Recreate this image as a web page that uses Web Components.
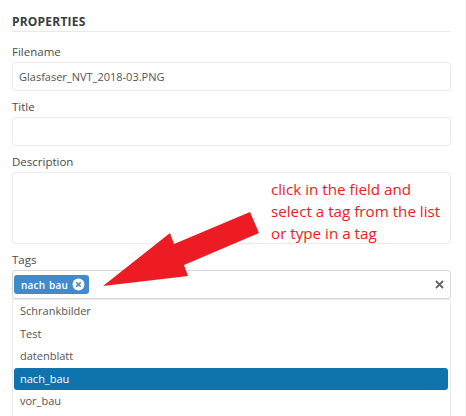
<!DOCTYPE html>
<html>
<head>
<meta charset="utf-8">
<style>
  html, body { margin: 0; padding: 0; background: #fff; }
  body { width: 466px; height: 416px; overflow: hidden; font-family: "Open Sans", sans-serif; }
</style>
</head>
<body>
<properties-panel>
  <prop-field label="Filename" value="Glasfaser_NVT_2018-03.PNG"></prop-field>
  <prop-field label="Title"></prop-field>
  <prop-field label="Description" rows="multi"></prop-field>
  <tag-select label="Tags" tag="nach_bau">
    <tag-option>Schrankbilder</tag-option>
    <tag-option>Test</tag-option>
    <tag-option>datenblatt</tag-option>
    <tag-option active>nach_bau</tag-option>
    <tag-option>vor_bau</tag-option>
  </tag-select>
  <red-note></red-note>
</properties-panel>

<script>
class PropertiesPanel extends HTMLElement {
  connectedCallback() {
    this.attachShadow({ mode: 'open' });
    this.shadowRoot.innerHTML = `
      <style>
        :host {
          display: block;
          position: relative;
          height: 416px;
          box-sizing: border-box;
          padding: 14px 14px 0 12px;
          background: #fff;
          border-right: 1px solid #f4f4f4;
          color: #4a4a4a;
          overflow: hidden;
        }
        h2 {
          margin: 0 0 12px;
          height: 17px;
          padding-bottom: 0;
          border-bottom: 1px solid #e8e8e8;
          font-size: 12px;
          line-height: 15px;
          font-weight: 700;
          color: #3c3c3c;
          letter-spacing: 0.2px;
        }
      </style>
      <h2>PROPERTIES</h2>
      <slot></slot>
    `;
  }
}
customElements.define('properties-panel', PropertiesPanel);

class PropField extends HTMLElement {
  connectedCallback() {
    this.attachShadow({ mode: 'open' });
    const multi = this.getAttribute('rows') === 'multi';
    this.shadowRoot.innerHTML = `
      <style>
        :host { display: block; margin-bottom: 8px; }
        label {
          display: block;
          height: 17px;
          margin-bottom: 1px;
          font-size: 11.5px;
          line-height: 16px;
          color: #4a4a4a;
        }
        .box {
          box-sizing: border-box;
          height: ${multi ? 72 : 29}px;
          padding: 0 6px;
          border: 1px solid #ebebeb;
          border-radius: 3px;
          font-size: 11px;
          line-height: 27px;
          color: #555;
        }
      </style>
      <label>${this.getAttribute('label')}</label>
      <div class="box">${this.getAttribute('value') || ''}</div>
    `;
  }
}
customElements.define('prop-field', PropField);

class TagSelect extends HTMLElement {
  connectedCallback() {
    this.attachShadow({ mode: 'open' });
    this.shadowRoot.innerHTML = `
      <style>
        :host { display: block; }
        label {
          display: block;
          height: 17px;
          margin-bottom: 1px;
          font-size: 11.5px;
          line-height: 16px;
          color: #4a4a4a;
        }
        .control {
          box-sizing: border-box;
          height: 29px;
          display: flex;
          align-items: center;
          justify-content: space-between;
          padding: 0 6px 0 1px;
          border: 1px solid #d6d6d6;
          border-radius: 3px;
        }
        .chip {
          display: flex;
          align-items: center;
          gap: 4px;
          height: 19px;
          padding: 0 4px 0 7px;
          background: #428bca;
          border-radius: 3px;
          color: #fff;
          font-size: 10px;
          font-weight: 600;
          letter-spacing: 0.2px;
          word-spacing: 1px;
        }
        .chip svg, .clear { display: block; }
        .list {
          box-sizing: border-box;
          height: 117px;
          padding: 0 2px 0 1px;
          border: 1px solid #ebebeb;
          border-bottom: 0;
        }
      </style>
      <label>${this.getAttribute('label')}</label>
      <div class="control">
        <span class="chip">nach&nbsp;bau
          <svg width="13" height="13" viewBox="0 0 13 13">
            <circle cx="6.5" cy="6.5" r="6" fill="#fff"/>
            <path d="M4.2 4.2l4.6 4.6M8.8 4.2l-4.6 4.6" stroke="#428bca" stroke-width="1.5" fill="none"/>
          </svg>
        </span>
        <svg class="clear" width="9" height="9" viewBox="0 0 9 9">
          <path d="M1 1l7 7M8 1l-7 7" stroke="#666" stroke-width="1.8" fill="none"/>
        </svg>
      </div>
      <div class="list"><slot></slot></div>
    `;
  }
}
customElements.define('tag-select', TagSelect);

class TagOption extends HTMLElement {
  connectedCallback() {
    this.attachShadow({ mode: 'open' });
    this.shadowRoot.innerHTML = `
      <style>
        :host {
          display: block;
          height: 22.6px;
          padding: 0 6px;
          border-radius: 3px;
          font-size: 11px;
          line-height: 22.6px;
          color: #555;
        }
        :host([active]) { background: #0f73ad; color: #fff; }
      </style>
      <slot></slot>
    `;
  }
}
customElements.define('tag-option', TagOption);

class RedNote extends HTMLElement {
  connectedCallback() {
    this.attachShadow({ mode: 'open' });
    this.shadowRoot.innerHTML = `
      <style>
        :host { display: block; }
        svg { position: absolute; left: 0; top: 0; }
        p {
          position: absolute;
          left: 271px;
          top: 179px;
          margin: 0;
          white-space: nowrap;
          font-family: "Open Sans", sans-serif;
          font-size: 15.2px;
          line-height: 21.8px;
          color: #ed1c24;
        }
      </style>
      <svg width="466" height="416">
        <polygon fill="#ed1c24" points="103,286 170,233 174,244 250,212 259,233 184,265 188,276"/>
      </svg>
      <p>click in the field and<br>select a tag from the list<br>or type in a tag</p>
    `;
  }
}
customElements.define('red-note', RedNote);
</script>
</body>
</html>
